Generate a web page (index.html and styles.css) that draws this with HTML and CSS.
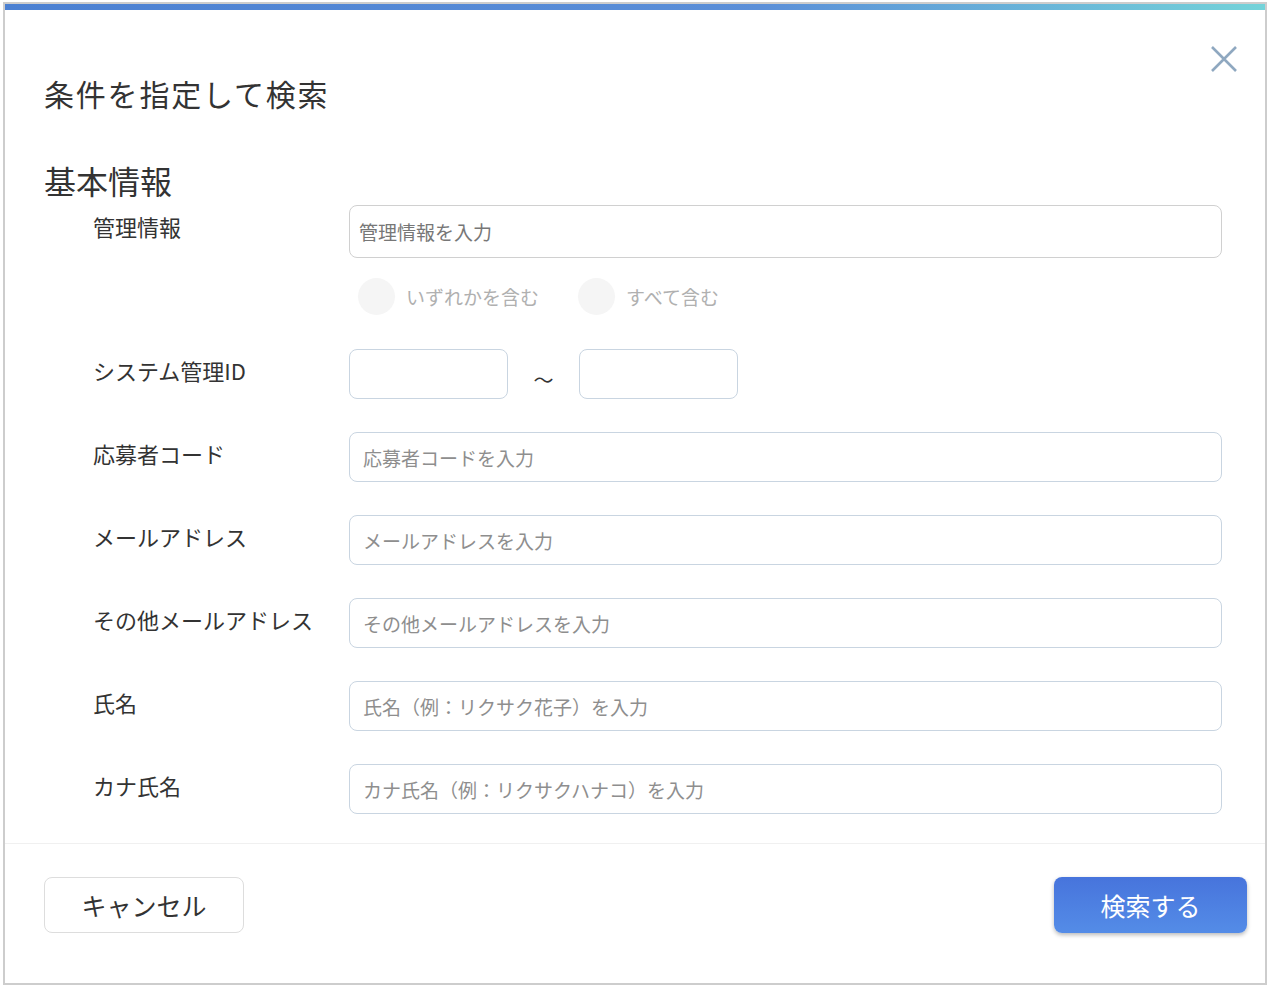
FILE: index.html
```html
<!DOCTYPE html>
<html lang="ja">
<head>
    <meta charset="utf-8">
    <title>条件を指定して検索</title>
    <link rel="stylesheet" href="styles.css">
</head>
<body>
    <div class="modal">
        <div class="modal-bar"></div>
        <div class="modal-head">
            <h1 class="modal-title">条件を指定して検索</h1>
            <button class="close-btn" type="button" aria-label="閉じる">
                <svg width="26" height="26" viewBox="0 0 26 26">
                    <path d="M1 1 L25 25 M25 1 L1 25" stroke="#8fa8c0" stroke-width="2.6" fill="none"/>
                </svg>
            </button>
        </div>

        <div class="modal-body">
            <h2 class="section-title">基本情報</h2>

            <div class="field field-first">
                <label class="field-label">管理情報</label>
                <div class="field-control">
                    <input class="text-input input-gray" type="text" placeholder="管理情報を入力">
                    <div class="radio-row">
                        <span class="radio"><span class="radio-dot"></span>いずれかを含む</span>
                        <span class="radio"><span class="radio-dot"></span>すべて含む</span>
                    </div>
                </div>
            </div>

            <div class="field field-id">
                <label class="field-label">システム管理ID</label>
                <div class="field-control range">
                    <input class="text-input range-input" type="text">
                    <span class="range-sep">～</span>
                    <input class="text-input range-input" type="text">
                </div>
            </div>

            <div class="field">
                <label class="field-label">応募者コード</label>
                <div class="field-control">
                    <input class="text-input" type="text" placeholder="応募者コードを入力">
                </div>
            </div>

            <div class="field">
                <label class="field-label">メールアドレス</label>
                <div class="field-control">
                    <input class="text-input" type="text" placeholder="メールアドレスを入力">
                </div>
            </div>

            <div class="field">
                <label class="field-label">その他メールアドレス</label>
                <div class="field-control">
                    <input class="text-input" type="text" placeholder="その他メールアドレスを入力">
                </div>
            </div>

            <div class="field">
                <label class="field-label">氏名</label>
                <div class="field-control">
                    <input class="text-input" type="text" placeholder="氏名（例：リクサク花子）を入力">
                </div>
            </div>

            <div class="field">
                <label class="field-label">カナ氏名</label>
                <div class="field-control">
                    <input class="text-input" type="text" placeholder="カナ氏名（例：リクサクハナコ）を入力">
                </div>
            </div>
        </div>

        <div class="modal-foot">
            <button class="btn btn-cancel" type="button">キャンセル</button>
            <button class="btn btn-search" type="button">検索する</button>
        </div>
    </div>
</body>
</html>
```

FILE: styles.css
```css
body {
    margin: 0;
    padding: 2px 3px;
    background: #fff;
    font-family: "Noto Sans CJK JP", "Noto Sans", sans-serif;
    color: #333;
}
.modal {
    width: 1260px;
    height: 979px;
    border: 2px solid #cdcdcd;
    background: #fff;
    display: flex;
    flex-direction: column;
}
.modal-bar {
    height: 6px;
    background: linear-gradient(to right, #4b80d2, #5b8fd8 60%, #74d3d9);
}
.modal-head {
    display: flex;
    justify-content: space-between;
    align-items: flex-start;
    padding: 0 28px 0 39px;
}
.modal-title {
    margin: 63px 0 0;
    font-size: 30px;
    font-weight: normal;
    line-height: 40px;
    letter-spacing: 1.8px;
    color: #333;
}
.close-btn {
    margin-top: 36px;
    padding: 0;
    border: none;
    background: none;
    width: 26px;
    height: 26px;
}
.modal-body {
    flex: 1;
    padding: 0 43px 0 39px;
}
.section-title {
    margin: 45px 0 0;
    font-size: 32px;
    font-weight: normal;
    line-height: 44px;
    color: #333;
}
.field {
    display: grid;
    grid-template-columns: 305px 1fr;
    margin-top: 33px;
}
.field-first {
    margin-top: 3px;
}
.field-id {
    margin-top: 34px;
}
.field-label {
    padding-left: 49px;
    font-size: 22px;
    line-height: 42px;
    color: #333;
    white-space: nowrap;
}
.text-input {
    display: block;
    box-sizing: border-box;
    width: 100%;
    height: 50px;
    padding: 0 13px;
    border: 1.5px solid #c9d5e1;
    border-radius: 8px;
    background: #fff;
    font-family: inherit;
    font-size: 19px;
    color: #333;
    outline: none;
}
.text-input::placeholder {
    color: #8e8e8e;
}
.input-gray {
    height: 53px;
    padding: 0 9px;
    border-color: #d0d0d0;
}
.input-gray::placeholder {
    color: #777;
}
.radio-row {
    display: flex;
    gap: 39px;
    margin-top: 20px;
    padding-left: 9px;
}
.radio {
    display: flex;
    align-items: center;
    gap: 11px;
    font-size: 19px;
    color: #b0b0b0;
}
.radio-dot {
    width: 37px;
    height: 37px;
    border-radius: 50%;
    background: #f5f5f5;
}
.range {
    display: flex;
    align-items: center;
}
.range-input {
    width: 159px;
    height: 50px;
}
.range-sep {
    width: 71px;
    text-align: center;
    font-size: 20px;
    padding-top: 10px;
    color: #333;
}
.modal-foot {
    display: flex;
    justify-content: space-between;
    align-items: flex-start;
    height: 140px;
    box-sizing: border-box;
    padding: 33px 18px 0 39px;
    border-top: 1px solid #f0f0f0;
}
.btn {
    height: 56px;
    border-radius: 8px;
    font-family: inherit;
    font-size: 25px;
}
.btn-cancel {
    width: 200px;
    border: 1.5px solid #dddddd;
    background: #fff;
    color: #333;
}
.btn-search {
    width: 193px;
    border: none;
    background: linear-gradient(to bottom, #4774dc, #548ce7);
    color: #fff;
    box-shadow: 0 2px 4px rgba(0, 0, 0, 0.28);
}
```
